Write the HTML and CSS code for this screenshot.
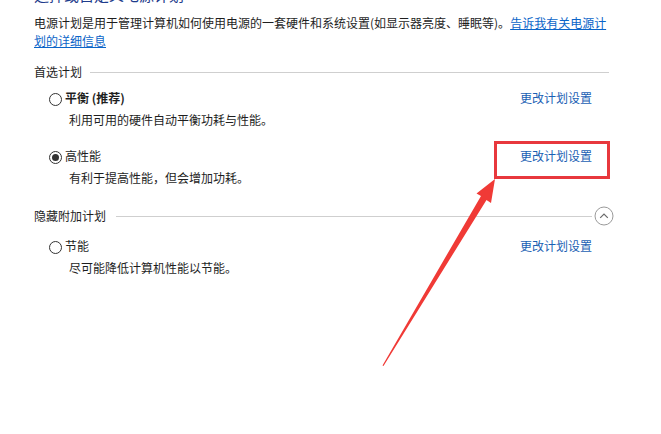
FILE: index.html
```html
<!DOCTYPE html>
<html lang="zh-CN">
<head>
<meta charset="utf-8">
<link rel="stylesheet" href="styles.css">
</head>
<body>
<div class="page">
  <div class="title">选择或自定义电源计划</div>
  <p class="intro">电源计划是用于管理计算机如何使用电源的一套硬件和系统设置(如显示器亮度、睡眠等)。<a class="link" href="#">告诉我有关电源计划的详细信息</a></p>

  <div class="section-head">
    <span class="section-label">首选计划</span>
    <span class="rule"></span>
  </div>

  <div class="plan plan-first">
    <div class="plan-row">
      <span class="radio"></span>
      <span class="plan-name bold">平衡 (推荐)</span>
      <a class="change" href="#">更改计划设置</a>
    </div>
    <div class="plan-desc">利用可用的硬件自动平衡功耗与性能。</div>
  </div>

  <div class="plan plan-second">
    <div class="plan-row">
      <span class="radio checked"></span>
      <span class="plan-name">高性能</span>
      <a class="change" href="#">更改计划设置</a>
    </div>
    <div class="plan-desc">有利于提高性能，但会增加功耗。</div>
  </div>

  <div class="section-head section-hidden">
    <span class="section-label">隐藏附加计划</span>
    <span class="rule"></span>
    <span class="toggle">
      <svg width="20" height="20" viewBox="0 0 20 20"><circle cx="10" cy="10" r="9" fill="#fff" stroke="#9a9a9a" stroke-width="1"/><path d="M6.2 11.8 L10 8 L13.8 11.8" fill="none" stroke="#6a6a6a" stroke-width="1.2"/></svg>
    </span>
  </div>

  <div class="plan plan-third">
    <div class="plan-row">
      <span class="radio"></span>
      <span class="plan-name">节能</span>
      <a class="change" href="#">更改计划设置</a>
    </div>
    <div class="plan-desc">尽可能降低计算机性能以节能。</div>
  </div>
</div>

<div class="highlight-box"></div>
<svg class="arrow" width="661" height="434" viewBox="0 0 661 434">
  <polygon points="495,179 491,203 486.5,200 383.5,366 382.5,365.5 481,196 476.5,193.5" fill="#f03a36"/>
</svg>
</body>
</html>
```

FILE: styles.css
```css
html, body {
  margin: 0;
  padding: 0;
  background: #ffffff;
}
body {
  width: 661px;
  height: 434px;
  overflow: hidden;
  position: relative;
  font-family: "Noto Sans CJK SC", "Noto Sans", sans-serif;
  font-size: 12px;
  color: #1e1e1e;
}
.page {
  width: 575px;
  padding-left: 34px;
}
.title {
  font-size: 15px;
  line-height: 20px;
  height: 20px;
  margin-top: -15px;
  color: #1e3c8c;
}
.intro {
  margin: 9px 0 0 0;
  line-height: 18px;
  font-size: 12px;
  width: 580px;
}
.link {
  color: #0a64c8;
  text-decoration: underline;
}
.section-head {
  display: flex;
  align-items: center;
  height: 18px;
  margin-top: 13px;
}
.section-label {
  line-height: 18px;
  white-space: nowrap;
}
.rule {
  flex: 1;
  height: 1px;
  background: #cfcfcf;
  margin-left: 8px;
}
.section-hidden {
  margin-top: 19px;
  width: 580px;
}
.section-hidden .rule {
  margin-left: 10px;
}
.toggle {
  display: flex;
  width: 20px;
  height: 20px;
  margin-left: 2px;
}
.plan {
  padding-left: 15px;
}
.plan-first { margin-top: 7px; }
.plan-second { margin-top: 16px; }
.plan-third { margin-top: 11px; }
.plan-row {
  display: flex;
  align-items: center;
  height: 20px;
}
.radio {
  width: 11px;
  height: 11px;
  border: 1px solid #333;
  border-radius: 50%;
  box-sizing: content-box;
  display: flex;
  align-items: center;
  justify-content: center;
  margin-right: 3px;
  margin-top: 2px;
}
.radio.checked::after {
  content: "";
  width: 7px;
  height: 7px;
  border-radius: 50%;
  background: #333;
}
.plan-name {
  line-height: 20px;
}
.bold {
  font-weight: bold;
}
.change {
  margin-left: auto;
  margin-right: 17px;
  color: #1a5fb4;
  text-decoration: none;
  line-height: 20px;
}
.plan-desc {
  padding-left: 20px;
  margin-top: 2px;
  line-height: 20px;
}
.highlight-box {
  position: absolute;
  left: 494px;
  top: 141px;
  width: 110px;
  height: 32px;
  border: 3px solid #e8383d;
}
.arrow {
  position: absolute;
  left: 0;
  top: 0;
}
```
